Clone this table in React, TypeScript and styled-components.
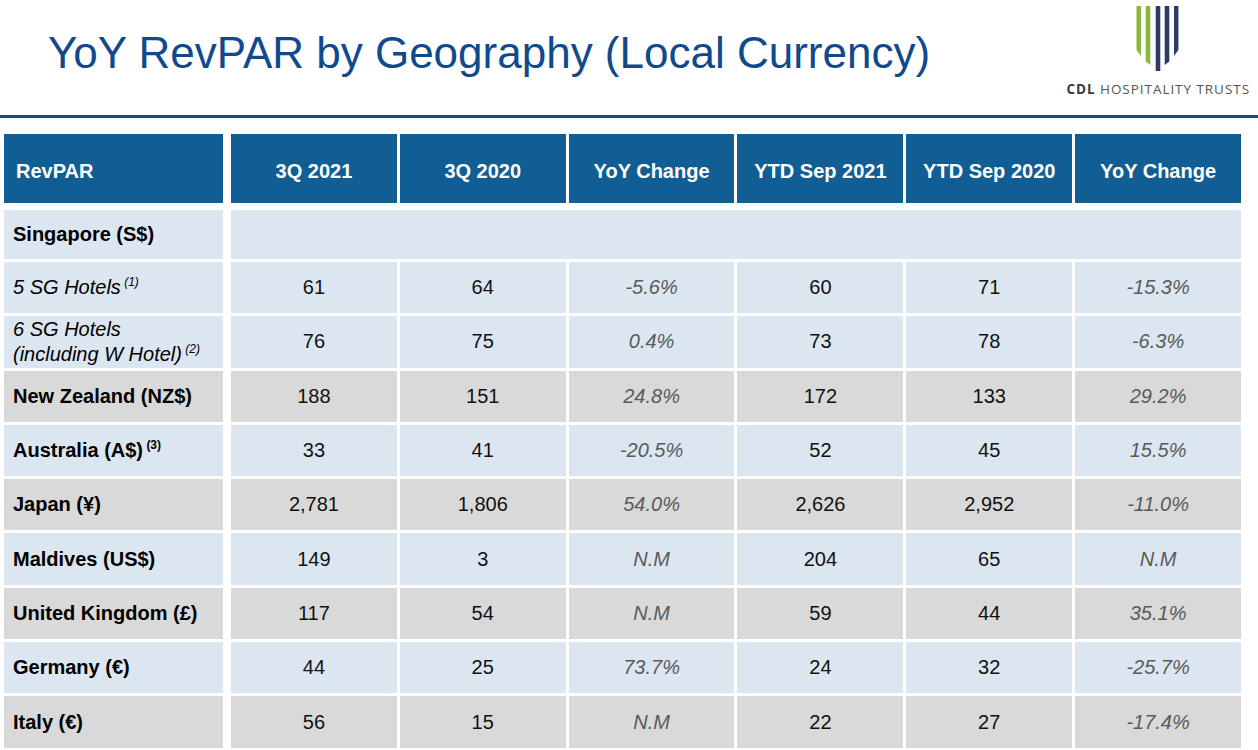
import React from "react";
import styled, { createGlobalStyle } from "styled-components";

const Global = createGlobalStyle`
  html, body { margin: 0; padding: 0; background: #ffffff; }
  body { font-family: "Liberation Sans", Arial, sans-serif; }
`;

const Slide = styled.div`
  width: 1258px;
  height: 750px;
  overflow: hidden;
  background: #ffffff;
  display: flex;
  flex-direction: column;
`;

const Header = styled.header`
  box-sizing: border-box;
  height: 118px;
  border-bottom: 3px solid #114c89;
  display: flex;
  justify-content: space-between;
  align-items: flex-start;
`;

const Title = styled.h1`
  margin: 31px 0 0 48px;
  font-size: 44px;
  line-height: 44px;
  font-weight: normal;
  color: #0f4a8c;
  white-space: nowrap;
`;

const Logo = styled.div`
  display: flex;
  flex-direction: column;
  align-items: center;
  padding: 4px 8px 0 0;
`;

const LogoText = styled.div`
  margin-top: 9px;
  font-family: "Open Sans", "Liberation Sans", sans-serif;
  font-size: 13.5px;
  line-height: 13px;
  letter-spacing: 0.95px;
  color: #555555;
  white-space: nowrap;
  b { font-weight: 700; color: #3a3a3a; }
`;

const Table = styled.div`
  margin: 16px 0 0 4px;
  width: 1237px;
  display: grid;
  grid-template-columns: 224px repeat(6, 1fr);
  grid-template-rows: 73px 49px repeat(9, 51.3px);
  gap: 3px;
`;

const HeadCell = styled.div<{ $first?: boolean }>`
  box-sizing: border-box;
  margin-bottom: 4px;
  margin-right: ${(p) => (p.$first ? "5px" : "0")};
  background: #115e95;
  color: #ffffff;
  font-weight: bold;
  font-size: 20px;
  display: flex;
  align-items: center;
  justify-content: ${(p) => (p.$first ? "flex-start" : "center")};
  padding: 6px 0 0 ${(p) => (p.$first ? "12px" : "0")};
  white-space: nowrap;
`;

type Tone = "blue" | "grey";

const Cell = styled.div<{ $tone: Tone; $span?: number }>`
  box-sizing: border-box;
  background: ${(p) => (p.$tone === "blue" ? "#dce6f1" : "#d9d9d9")};
  grid-column: ${(p) => (p.$span ? `span ${p.$span}` : "auto")};
  display: flex;
  align-items: center;
  justify-content: center;
  font-size: 20px;
  line-height: 25px;
`;

const LabelCell = styled(Cell)<{ $italic?: boolean }>`
  margin-right: 5px;
  justify-content: flex-start;
  padding-left: 9px;
  color: #000000;
  font-weight: ${(p) => (p.$italic ? "normal" : "bold")};
  font-style: ${(p) => (p.$italic ? "italic" : "normal")};
`;

const ValueCell = styled(Cell)<{ $pct?: boolean }>`
  color: ${(p) => (p.$pct ? "#5a5a5a" : "#111111")};
  font-style: ${(p) => (p.$pct ? "italic" : "normal")};
`;

const Sup = styled.span`
  font-size: 12px;
  line-height: 0;
  vertical-align: 8px;
`;

type Row = {
  label: string;
  line2?: string;
  sup?: string;
  italic?: boolean;
  tone: Tone;
  values: string[];
};

const heads = ["3Q 2021", "3Q 2020", "YoY Change", "YTD Sep 2021", "YTD Sep 2020", "YoY Change"];

const rows: Row[] = [
  { label: "5 SG Hotels", sup: "(1)", italic: true, tone: "blue", values: ["61", "64", "-5.6%", "60", "71", "-15.3%"] },
  { label: "6 SG Hotels", line2: "(including W Hotel)", sup: "(2)", italic: true, tone: "blue", values: ["76", "75", "0.4%", "73", "78", "-6.3%"] },
  { label: "New Zealand (NZ$)", tone: "grey", values: ["188", "151", "24.8%", "172", "133", "29.2%"] },
  { label: "Australia (A$)", sup: "(3)", tone: "blue", values: ["33", "41", "-20.5%", "52", "45", "15.5%"] },
  { label: "Japan (¥)", tone: "grey", values: ["2,781", "1,806", "54.0%", "2,626", "2,952", "-11.0%"] },
  { label: "Maldives (US$)", tone: "blue", values: ["149", "3", "N.M", "204", "65", "N.M"] },
  { label: "United Kingdom (£)", tone: "grey", values: ["117", "54", "N.M", "59", "44", "35.1%"] },
  { label: "Germany (€)", tone: "blue", values: ["44", "25", "73.7%", "24", "32", "-25.7%"] },
  { label: "Italy (€)", tone: "grey", values: ["56", "15", "N.M", "22", "27", "-17.4%"] },
];

const LogoMark = () => (
  <svg width="48" height="70" viewBox="0 0 48 70">
    <polygon points="2.5,2 7,2 7,52 2.5,46" fill="#8db63c" />
    <polygon points="11.7,2 16.3,2 16.3,61 11.7,57.5" fill="#8db63c" />
    <polygon points="21.7,2 26.3,2 26.3,67 21.7,67" fill="#2c3a66" />
    <polygon points="30.7,2 35.3,2 35.3,57.5 30.7,61" fill="#2c3a66" />
    <polygon points="40,2 44.4,2 44.4,46 40,52" fill="#2c3a66" />
  </svg>
);

export default function App() {
  return (
    <Slide>
      <Global />
      <Header>
        <Title>YoY RevPAR by Geography (Local Currency)</Title>
        <Logo>
          <LogoMark />
          <LogoText>
            <b>CDL</b> HOSPITALITY TRUSTS
          </LogoText>
        </Logo>
      </Header>
      <Table>
        <HeadCell $first>RevPAR</HeadCell>
        {heads.map((h, i) => (
          <HeadCell key={i}>{h}</HeadCell>
        ))}
        <LabelCell $tone="blue">Singapore (S$)</LabelCell>
        <Cell $tone="blue" $span={6} />
        {rows.map((r) => (
          <React.Fragment key={r.label}>
            <LabelCell $tone={r.tone} $italic={r.italic}>
              <span>
                {r.label}
                {r.line2 && (
                  <>
                    <br />
                    {r.line2}
                  </>
                )}
                {r.sup && <Sup> {r.sup}</Sup>}
              </span>
            </LabelCell>
            {r.values.map((v, i) => (
              <ValueCell key={i} $tone={r.tone} $pct={i === 2 || i === 5}>
                {v}
              </ValueCell>
            ))}
          </React.Fragment>
        ))}
      </Table>
    </Slide>
  );
}
